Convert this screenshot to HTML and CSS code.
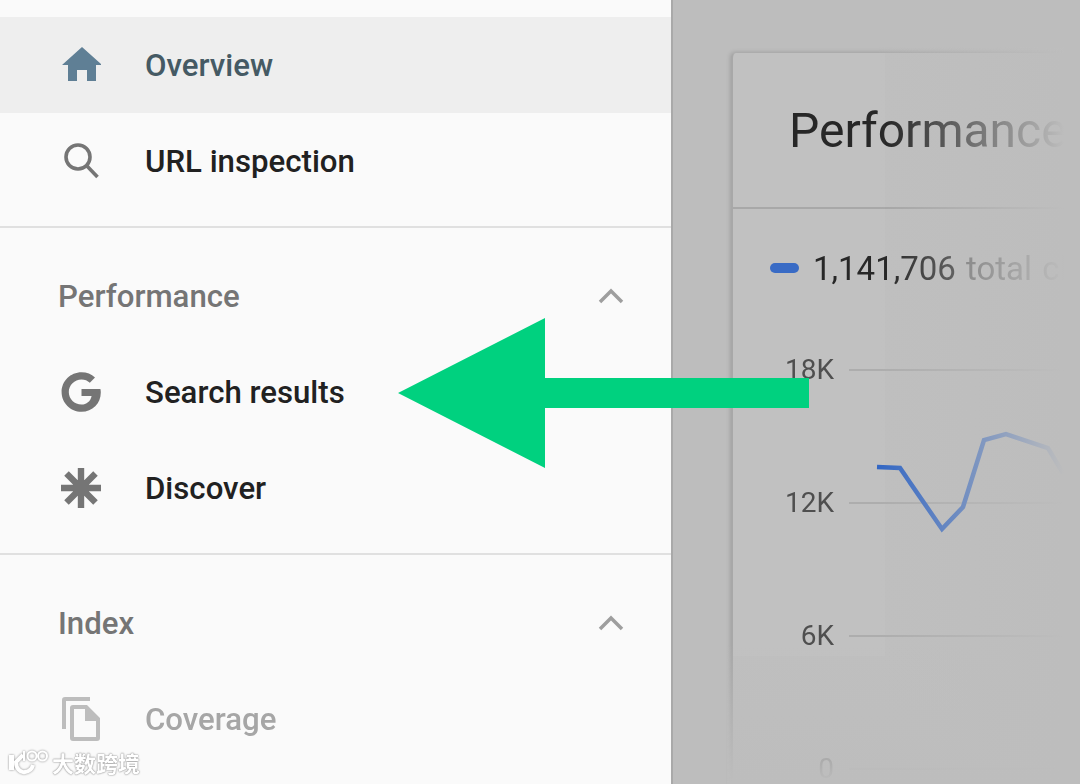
FILE: index.html
```html
<!DOCTYPE html>
<html lang="en">
  <head>
    <meta charset="UTF-8" />
    <meta name="viewport" content="width=device-width, initial-scale=1.0" />
    <title>Search Console</title>
    <link rel="stylesheet" href="styles.css">
  </head>
  <body>
    <div class="page">
      <nav class="sidebar">
        <div class="nav-group nav-group-top">
          <a class="nav-item active">
            <svg class="nav-icon" viewBox="-1 0 40 36"><path d="M20 0 L40 18 H34 V34 H25 V23 H15 V34 H6 V18 H0 Z" /></svg>
            <span>Overview</span>
          </a>
          <a class="nav-item">
            <svg class="nav-icon" viewBox="0 0 40 36"><circle cx="17" cy="14" r="12" class="stroke-icon" /><path d="M25.5 22.5 L36.5 34" class="stroke-icon" /></svg>
            <span>URL inspection</span>
          </a>
        </div>
        <div class="nav-group">
          <div class="nav-heading">
            <span>Performance</span>
            <svg class="chevron" viewBox="0 0 26 16"><path d="M2 14 L13 3 L24 14" /></svg>
          </div>
          <a class="nav-item">
            <svg class="nav-icon" viewBox="0 0 40 40"><path d="M20.5 17 V24 H30.6 C29.4 29.5 25.5 32.6 20.5 32.6 C13.5 32.6 7.8 27 7.8 20 C7.8 13 13.5 7.4 20.5 7.4 C23.8 7.4 26.6 8.6 28.8 10.7 L34 5.5 C30.4 2.1 25.8 0.2 20.5 0.2 C9.5 0.2 0.6 9 0.6 20 C0.6 31 9.5 39.8 20.5 39.8 C31.5 39.8 39.8 31.5 39.8 20.5 C39.8 19.3 39.7 18.1 39.4 17 Z" /></svg>
            <span>Search results</span>
          </a>
          <a class="nav-item">
            <svg class="nav-icon" viewBox="0 0 40 40"><path class="star-icon" d="M20 0 V40 M0 20 H40 M5.5 5.5 L34.5 34.5 M34.5 5.5 L5.5 34.5" /></svg>
            <span>Discover</span>
          </a>
        </div>
        <div class="nav-group">
          <div class="nav-heading">
            <span>Index</span>
            <svg class="chevron" viewBox="0 0 26 16"><path d="M2 14 L13 3 L24 14" /></svg>
          </div>
          <a class="nav-item nav-item-faded">
            <svg class="nav-icon nav-icon-tall" viewBox="-1 0 40 44"><path d="M28 0 H3 Q0 0 0 3 V32 H4 V4 H28 Z" /><path fill-rule="evenodd" d="M11 8 H25 L38 21 V41 Q38 44 35 44 H11 Q8 44 8 41 V11 Q8 8 11 8 Z M12 12 V40 H34 V24 H23 V12 Z" /></svg>
            <span>Coverage</span>
          </a>
        </div>
      </nav>

      <main class="content">
        <section class="card">
          <h1 class="card-title">Performance</h1>
          <div class="legend">
            <span class="legend-mark"></span>
            <span>1,141,706 <span class="legend-label">total cl</span></span>
          </div>
          <div class="chart">
            <div class="chart-row"><span class="tick">18K</span><span class="grid-line"></span></div>
            <div class="chart-row"><span class="tick">12K</span><span class="grid-line"></span></div>
            <div class="chart-row"><span class="tick">6K</span><span class="grid-line"></span></div>
            <div class="chart-row"><span class="tick">0</span><span class="grid-line"></span></div>
            <svg class="chart-line" viewBox="0 0 200 110"><polyline points="1,42 24,43 66,104 87,82 108,15 130,9 172,23 187,48" /></svg>
          </div>
        </section>
      </main>
    </div>

    <svg class="arrow" viewBox="0 0 411 150"><path d="M0 75 L147 0 V60 H411 V90 H147 V150 Z" /></svg>

    <div class="watermark">
      <svg class="watermark-logo" viewBox="0 0 40 26">
        <path class="logo-fill" d="M0 6 H5 V21 H0 Z" />
        <path class="logo-line" d="M14 6 L7 13 C7 19 11 24 16 23 C20 22.500 23 20 24 16" />
        <path class="logo-line logo-thin" d="M15 2 V12" />
        <circle class="logo-line logo-thin" cx="23" cy="7" r="4.500" />
        <circle class="logo-line logo-thin" cx="33.500" cy="7" r="4.500" />
      </svg>
      <span>大数跨境</span>
    </div>
  </body>
</html>
```

FILE: styles.css
```css
* {
  box-sizing: border-box;
}

html,
body {
  margin: 0;
  height: 100%;
  overflow: hidden;
}

body {
  font-family: Roboto, "Liberation Sans", sans-serif;
  background-color: #bdbdbd;
}

/* the reference is an enlarged phone capture, a bit soft */
.page {
  display: flex;
  height: 784px;
  filter: blur(0.4px);
}

/* sidebar */
.sidebar {
  flex: 0 0 673px;
  background-color: #fafafa;
  border-right: 2px solid #a9a9a9;
}

.nav-group {
  padding: 20px 0 17px;
  border-bottom: 2px solid #e0e0e0;
}

.nav-group-top {
  padding-top: 17px;
}

.nav-group:last-child {
  border-bottom: none;
}

.nav-item,
.nav-heading {
  display: flex;
  align-items: center;
  height: 96px;
  font-size: 31.2px;
  font-weight: 500;
  color: #212121;
}

.nav-item {
  padding-left: 61px;
}

.nav-item.active {
  background-color: #eeeeee;
  color: #455a64;
}

.nav-item-faded {
  color: #a6a6a6;
}

.nav-icon {
  width: 40px;
  height: 40px;
  margin-right: 44px;
  fill: #757575;
}

.nav-icon-tall {
  height: 44px;
}

.active .nav-icon {
  fill: #5f7f95;
}

.nav-item-faded .nav-icon {
  fill: #bdbdbd;
}

.stroke-icon {
  fill: none;
  stroke: #757575;
  stroke-width: 3.6;
}

.star-icon {
  fill: none;
  stroke: #757575;
  stroke-width: 6.4;
}

.nav-heading {
  justify-content: space-between;
  padding: 0 47px 0 58px;
  color: #757575;
}

.chevron {
  width: 26px;
  height: 16px;
  fill: none;
  stroke: #9e9e9e;
  stroke-width: 3.5;
}

/* dimmed content */
.content {
  flex: 1;
  padding: 53px 0 0 58px;
  overflow: hidden;
}

.card {
  position: relative;
  width: 334px;
  height: 760px;
  background-color: #bfbfbf;
  border-radius: 5px 0 0 0;
  box-shadow: -1px -1px 4px rgba(0, 0, 0, 0.15);
  border-left: 2px solid #a8a8a8;
}

/* lighter part of the card, left of the chart line */
.card::before {
  content: "";
  position: absolute;
  left: 0;
  top: 0;
  width: 152px;
  height: 603px;
  background-color: rgba(255, 255, 255, 0.03);
}

/* fades the card out to the right and towards the bottom */
.card::after {
  content: "";
  position: absolute;
  inset: -6px -6px 0 -6px;
  background: linear-gradient(to right, rgba(189, 189, 189, 0) 44%, #bdbdbd 98%),
    linear-gradient(to bottom, rgba(189, 189, 189, 0) 78%, #bdbdbd 96%);
}

.card-title {
  margin: 0;
  height: 156px;
  padding: 43px 0 0 56px;
  font-size: 48px;
  font-weight: 400;
  line-height: 70px;
  color: #212121;
  border-bottom: 2px solid #a6a6a6;
}

.legend {
  display: flex;
  align-items: center;
  gap: 14px;
  height: 118px;
  padding-left: 37px;
  font-size: 33px;
  word-spacing: 2px;
  color: #212121;
  white-space: nowrap;
}

.legend-mark {
  flex: 0 0 29px;
  height: 10px;
  border-radius: 5px;
  background-color: #3367c4;
}

.legend-label {
  color: #5f5f5f;
}

.chart {
  position: relative;
  margin-top: -24px;
}

.chart-row {
  display: flex;
  align-items: center;
  height: 133px;
}

.tick {
  width: 101px;
  text-align: right;
  font-size: 28px;
  line-height: 1;
  color: #4f4f4f;
}

.grid-line {
  flex: 1;
  height: 2px;
  margin-left: 15px;
  background-color: #adadad;
}

.chart-line {
  position: absolute;
  left: 143px;
  top: 122px;
  width: 200px;
  height: 110px;
  fill: none;
  stroke: #3367c4;
  stroke-width: 4.5;
}

/* annotation on top of the screenshot */
.arrow {
  position: absolute;
  left: 398px;
  top: 318px;
  width: 411px;
  height: 150px;
  fill: #00d17f;
}

.watermark {
  position: absolute;
  left: 9px;
  top: 746px;
  display: flex;
  align-items: center;
  gap: 3px;
  font-family: "Noto Sans CJK SC", sans-serif;
  font-size: 22px;
  font-weight: 700;
  color: #ffffff;
  text-shadow: 0 0 2px #8a8a8a, 0 0 1px #8a8a8a;
}

.watermark-logo {
  width: 40px;
  height: 26px;
  overflow: visible;
  filter: drop-shadow(0 0 1px #8a8a8a);
}

.logo-fill {
  fill: #ffffff;
}

.logo-line {
  fill: none;
  stroke: #ffffff;
  stroke-width: 4;
}

.logo-thin {
  stroke-width: 2;
}
```
